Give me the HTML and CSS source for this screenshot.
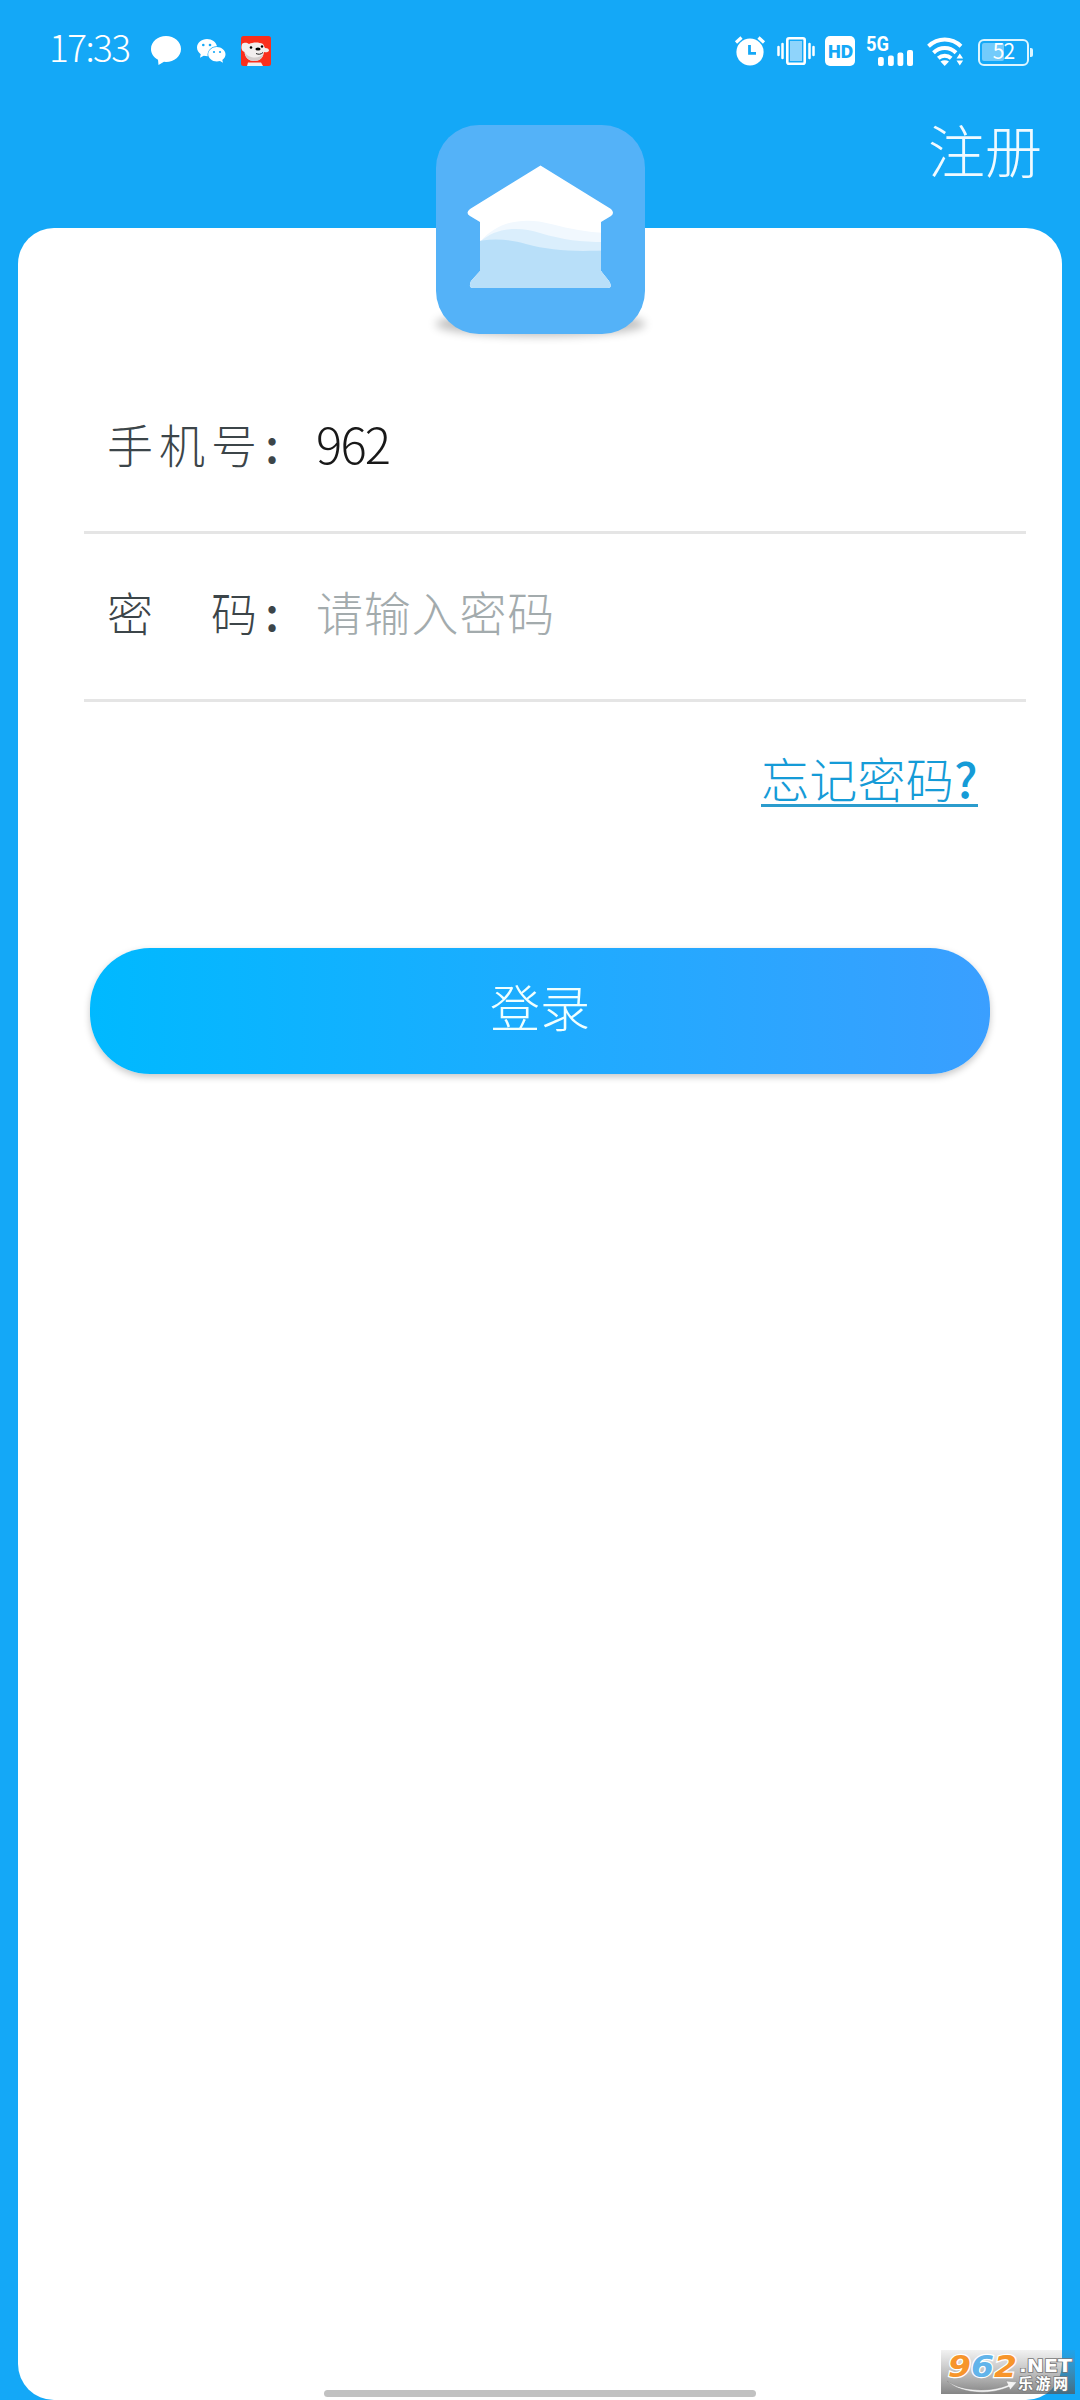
FILE: index.html
```html
<!DOCTYPE html>
<html lang="zh-CN">
<head>
<meta charset="utf-8">
<title>登录</title>
<link rel="stylesheet" href="styles.css">
</head>
<body>
<div class="screen">
  <header class="status">
    <div class="status-left">
      <span class="clock">17:33</span>
      <svg class="ic-bubble" width="30" height="29" viewBox="0 0 30 29"><path fill="#fff" d="M15 0C6.700 0 0 5.700 0 13c0 4.600 2.700 8.500 7 10.700L7.500 29l5.500-3.200 2 .2c8.300 0 15-5.700 15-13S23.300 0 15 0z"/></svg>
      <svg class="ic-wechat" width="29" height="25" viewBox="0 0 29 25"><path fill="#fff" d="M10 0C4.500 0 0 3.800 0 8.600c0 2.800 1.500 5.100 3.700 6.700L3 18.700l3.700-2 4 .6C9.800 11.500 14.500 7 20 7.200 19 3 15 0 10 0z"/><path fill="#fff" d="M28.500 15.300c0-4-4-7.300-8.700-7.300S11.200 11.300 11.200 15.300s3.900 7.200 8.600 7.200c1.100 0 2.200-.2 3.200-.5l3 1.800-.7-2.800c2-1.400 3.200-3.400 3.200-5.700z"/><g fill="#14a8f7"><circle cx="6.300" cy="6" r="1.300"/><circle cx="13" cy="6" r="1.300"/><circle cx="17" cy="13" r="1.100"/><circle cx="23" cy="13" r="1.100"/></g></svg>
      <svg class="ic-dog" width="30" height="30" viewBox="0 0 30 30"><rect width="30" height="30" rx="2.500" fill="#fa2e1c"/><path fill="#f2eeee" d="M1 8c3-2 5-1 7 0 4-2 10-2 14 0l2 4c3 0 4 1 4 3-2 2-4 1-5 1-1 6-4 9-10 9-5 0-9-3-9.500-9C0 15 0 11 1 8z"/><path fill="#d3cdcd" d="M3.500 16c1 6 5 9 10 9 5 0 8-3 9-7-4 5-15 5-19-2z"/><path fill="#eee" d="M7 26.500h13l2 3.500H6z"/><circle cx="10" cy="11.500" r="1.300"/><circle cx="21" cy="10.500" r="1.200"/><ellipse cx="17" cy="13" rx="2.600" ry="1.500"/><path d="M15 17.500c2.500 1.200 5 1 7-1" fill="none" stroke="#222" stroke-width="1"/></svg>
    </div>
    <div class="status-right">
      <svg class="ic-alarm" width="30" height="30" viewBox="0 0 30 30"><circle cx="15" cy="16" r="13.600" fill="#fff"/><path d="M1 6.500l5.500-5M29 6.500l-5.500-5" stroke="#fff" stroke-width="3.200" fill="none"/><path d="M14.500 9v8.300h6.500" stroke="#14a8f7" stroke-width="2.800" fill="none"/></svg>
      <svg class="ic-vibrate" width="38" height="28" viewBox="0 0 38 28"><rect x="10.300" y="1.300" width="17.400" height="25.400" rx="1.800" fill="none" stroke="#fff" stroke-width="2.600"/><rect x="13" y="4" width="12" height="20" fill="#8fd4fb"/><path d="M1.500 10v8M5.500 7v14M32.500 7v14M36.500 10v8" stroke="#fff" stroke-width="2.500" stroke-linecap="round"/></svg>
      <div class="hd">HD</div>
      <svg class="ic-signal" width="48" height="32" viewBox="0 0 48 32"><text class="net" x="0" y="15.500" textLength="23" lengthAdjust="spacingAndGlyphs">5G</text><g fill="#fff"><rect x="12" y="22" width="5.800" height="9" rx="2"/><rect x="22" y="20.500" width="5.800" height="10.500" rx="2"/><rect x="31.500" y="17.500" width="5.800" height="13.500" rx="2"/><rect x="41" y="15" width="6" height="16" rx="2"/></g></svg>
      <svg class="ic-wifi" width="37" height="29" viewBox="0 0 37 29"><g fill="none" stroke="#fff" stroke-width="4"><path d="M1.500 9.200c9.500-8.800 23-8.800 32.500 0"/><path d="M6.500 15.700c6.500-6.200 16-6.200 22.500 0"/><path d="M11.300 21.200c3.700-3.200 9.200-3.200 12.900 0"/></g><path d="M13.500 24.500c2.500-1.600 6-1.600 8.500 0L17.700 29z" fill="#fff"/><path d="M29.500 21.500l3.300-5 3.300 5zM29.500 23.500h6.600l-3.300 5z" fill="#fff"/></svg>
      <div class="battery"><span class="level"></span><span class="percent">52</span></div>
    </div>
  </header>
  <nav class="topbar"><a class="register">注册</a></nav>
  <main class="card">
    <svg class="logo" width="241" height="241" viewBox="-16 -16 241 241">
      <defs><filter id="soft" x="-20%" y="-200%" width="140%" height="500%"><feGaussianBlur stdDeviation="5"/></filter>
      <clipPath id="body"><path d="M104.500 40.500L175 84q4 4 0 7l-10 6v49l8 10q4 7-1 7H37q-5 0-2-7l9-10V97l-10-6q-5-3 0-7z"/></clipPath></defs>
      <ellipse cx="104.500" cy="199" rx="105" ry="12" fill="#000" opacity=".26" filter="url(#soft)"/>
      <rect width="209" height="209" rx="43" fill="#54b2f8"/>
      <g clip-path="url(#body)"><path fill="#fff" d="M20 30h170v150H20z"/><path fill="#f1f8fe" d="M44 117c18-22 46-25 71-18 20 5 35 8 55 9v30H44z"/><path fill="#daeefc" d="M44 117c15-14 38-16 60-9 24 7 40 9 65 9v30H44z"/><path fill="#b8dff9" d="M30 119c24-7 42-5 60 0 26 7 50 8 86 6v50H30z"/></g>
    </svg>
    <form class="fields">
      <div class="field"><span class="label"><span>手</span><span>机</span><span>号</span></span><span class="colon">:</span><span class="value">962</span></div>
      <div class="field"><span class="label"><span>密</span><span>码</span></span><span class="colon">:</span><span class="placeholder">请输入密码</span></div>
    </form>
    <a class="forgot">忘记密码<b>?</b></a>
    <div class="login">登录</div>
  </main>
  <div class="home-bar"></div>
  <svg class="watermark" width="134" height="44" viewBox="0 0 134 44">
    <defs><linearGradient id="shade" x1="0" y1="0" x2="0" y2="1"><stop offset="0" stop-color="#777" stop-opacity=".1"/><stop offset="1" stop-color="#555" stop-opacity=".72"/></linearGradient></defs>
    <rect width="134" height="44" fill="url(#shade)"/>
    <path d="M6 31c14 10 42 12 61 4l-2-4 11 1-7 8-1-3C47 46 18 43 6 31z" fill="#f4f4f4" stroke="#888" stroke-width=".5"/>
    <text class="wm-num" x="7" y="27" textLength="69" lengthAdjust="spacingAndGlyphs"><tspan fill="#f7952b">9</tspan><tspan fill="#62b4ea">6</tspan><tspan fill="#f7952b">2</tspan></text>
    <text class="wm-net" x="78" y="21.500" textLength="53" lengthAdjust="spacingAndGlyphs">.NET</text>
    <text class="wm-cn" x="77" y="39" textLength="50">乐游网</text>
  </svg>
</div>
</body>
</html>
```
FILE: styles.css
```css
* { box-sizing: border-box; }
body { margin: 0; }
.screen {
  position: relative;
  width: 1080px;
  height: 2400px;
  padding: 0 18px;
  overflow: hidden;
  display: flex;
  flex-direction: column;
  background: #14a8f7;
  color: #3c4549;
  font-family: "Noto Sans CJK SC", sans-serif;
  font-weight: 300;
}
.status {
  height: 100px;
  flex: none;
  display: flex;
  justify-content: space-between;
  padding: 36px 30px 0 33px;
  color: #fff;
}
.status svg { display: block; overflow: visible; flex: none; }
.status-left, .status-right { display: flex; align-items: flex-start; }
.clock { width: 102px; margin: -5px 0 0 -2px; font-size: 37px; line-height: 30px; letter-spacing: -1.6px; }
.ic-wechat { margin: 3px 0 0 16px; }
.ic-dog { margin-left: 15px; }
.ic-vibrate { margin: 1px 0 0 12px; }
.hd {
  width: 30px; height: 30px; margin-left: 10px;
  border-radius: 5px; background: #fff; color: #14a8f7;
  font: 800 18px/31px "Noto Sans", sans-serif;
  letter-spacing: -1px;
  text-align: center;
}
.ic-signal { margin: -1px 1px 0 11px; }
.net { font: 700 20px Roboto, sans-serif; fill: #fff; }
.ic-wifi { margin: 1px 0 0 12px; }
.battery {
  position: relative;
  width: 51px; height: 27px; margin: 3px 3px 0 14px;
  border: 2.5px solid #dcf5ff; border-radius: 6px;
  padding: 2px;
}
.battery::after {
  content: ""; position: absolute; right: -6px; top: 7px;
  width: 3px; height: 9px; border-radius: 0 2px 2px 0; background: #dcf5ff;
}
.level { display: block; width: 22px; height: 18px; border-radius: 2px; background: #73cbfb; }
.percent { position: absolute; left: 0; top: -1px; width: 47px; font-size: 21px; font-weight: 400; line-height: 20px; text-align: center; letter-spacing: -1px; }
.topbar { height: 128px; flex: none; display: flex; justify-content: flex-end; padding: 8px 20px 0 0; }
.register { color: #f0faff; font-size: 57px; line-height: 80px; }
.card {
  height: 2172px;
  flex: none;
  display: flex;
  flex-direction: column;
  align-items: center;
  background: #fff;
  border-radius: 36px;
}
.logo { display: block; flex: none; margin: -119px 0 0 1px; }
.fields { width: 942px; margin: 16px 0 0 30px; display: flex; flex-direction: column; }
.field {
  height: 168px;
  display: flex;
  align-items: center;
  padding: 0 0 12px 23px;
  border-bottom: 3px solid #e5e5e5;
}
.label { width: 150px; display: flex; justify-content: space-between; font-size: 46px; line-height: 60px; }
.colon { width: 59px; padding-left: 8px; font-size: 47px; line-height: 60px; font-weight: 500; }
.value { color: #181818; font-size: 49px; line-height: 60px; letter-spacing: -1.800px; }
.placeholder { color: #a3abad; font-size: 47px; line-height: 60px; letter-spacing: .8px; }
.forgot {
  align-self: flex-end;
  height: 60px;
  margin: 45px 84px 0 0;
  border-bottom: 3px solid #2b9ccd;
  color: #159bd7;
  font-size: 48px;
  line-height: 60px;
  letter-spacing: .3px;
}
.forgot b { font-weight: 500; }
.login {
  width: 900px;
  height: 126px;
  margin-top: 141px;
  border-radius: 60px;
  background: linear-gradient(90deg, #00b9ff, #3a9fff);
  box-shadow: 0 3px 7px rgba(0, 0, 0, .22);
  color: #f0ffff;
  font-size: 50px;
  line-height: 115px;
  text-align: center;
}
.home-bar { position: absolute; left: 324px; top: 2390px; width: 432px; height: 7px; border-radius: 4px; background: #c1c1c1; }
.watermark { position: absolute; left: 941px; top: 2350px; overflow: visible; }
.wm-num { font: italic 700 31px "DejaVu Sans", sans-serif; stroke: #fff; stroke-width: 2.5px; paint-order: stroke; }
.wm-net { font: 700 17px "DejaVu Sans", sans-serif; fill: #fff; stroke: #777; stroke-width: 1.5px; paint-order: stroke; }
.wm-cn { font: 700 15px "Noto Sans CJK SC", sans-serif; fill: #fff; stroke: #777; stroke-width: 1.5px; paint-order: stroke; }
```
